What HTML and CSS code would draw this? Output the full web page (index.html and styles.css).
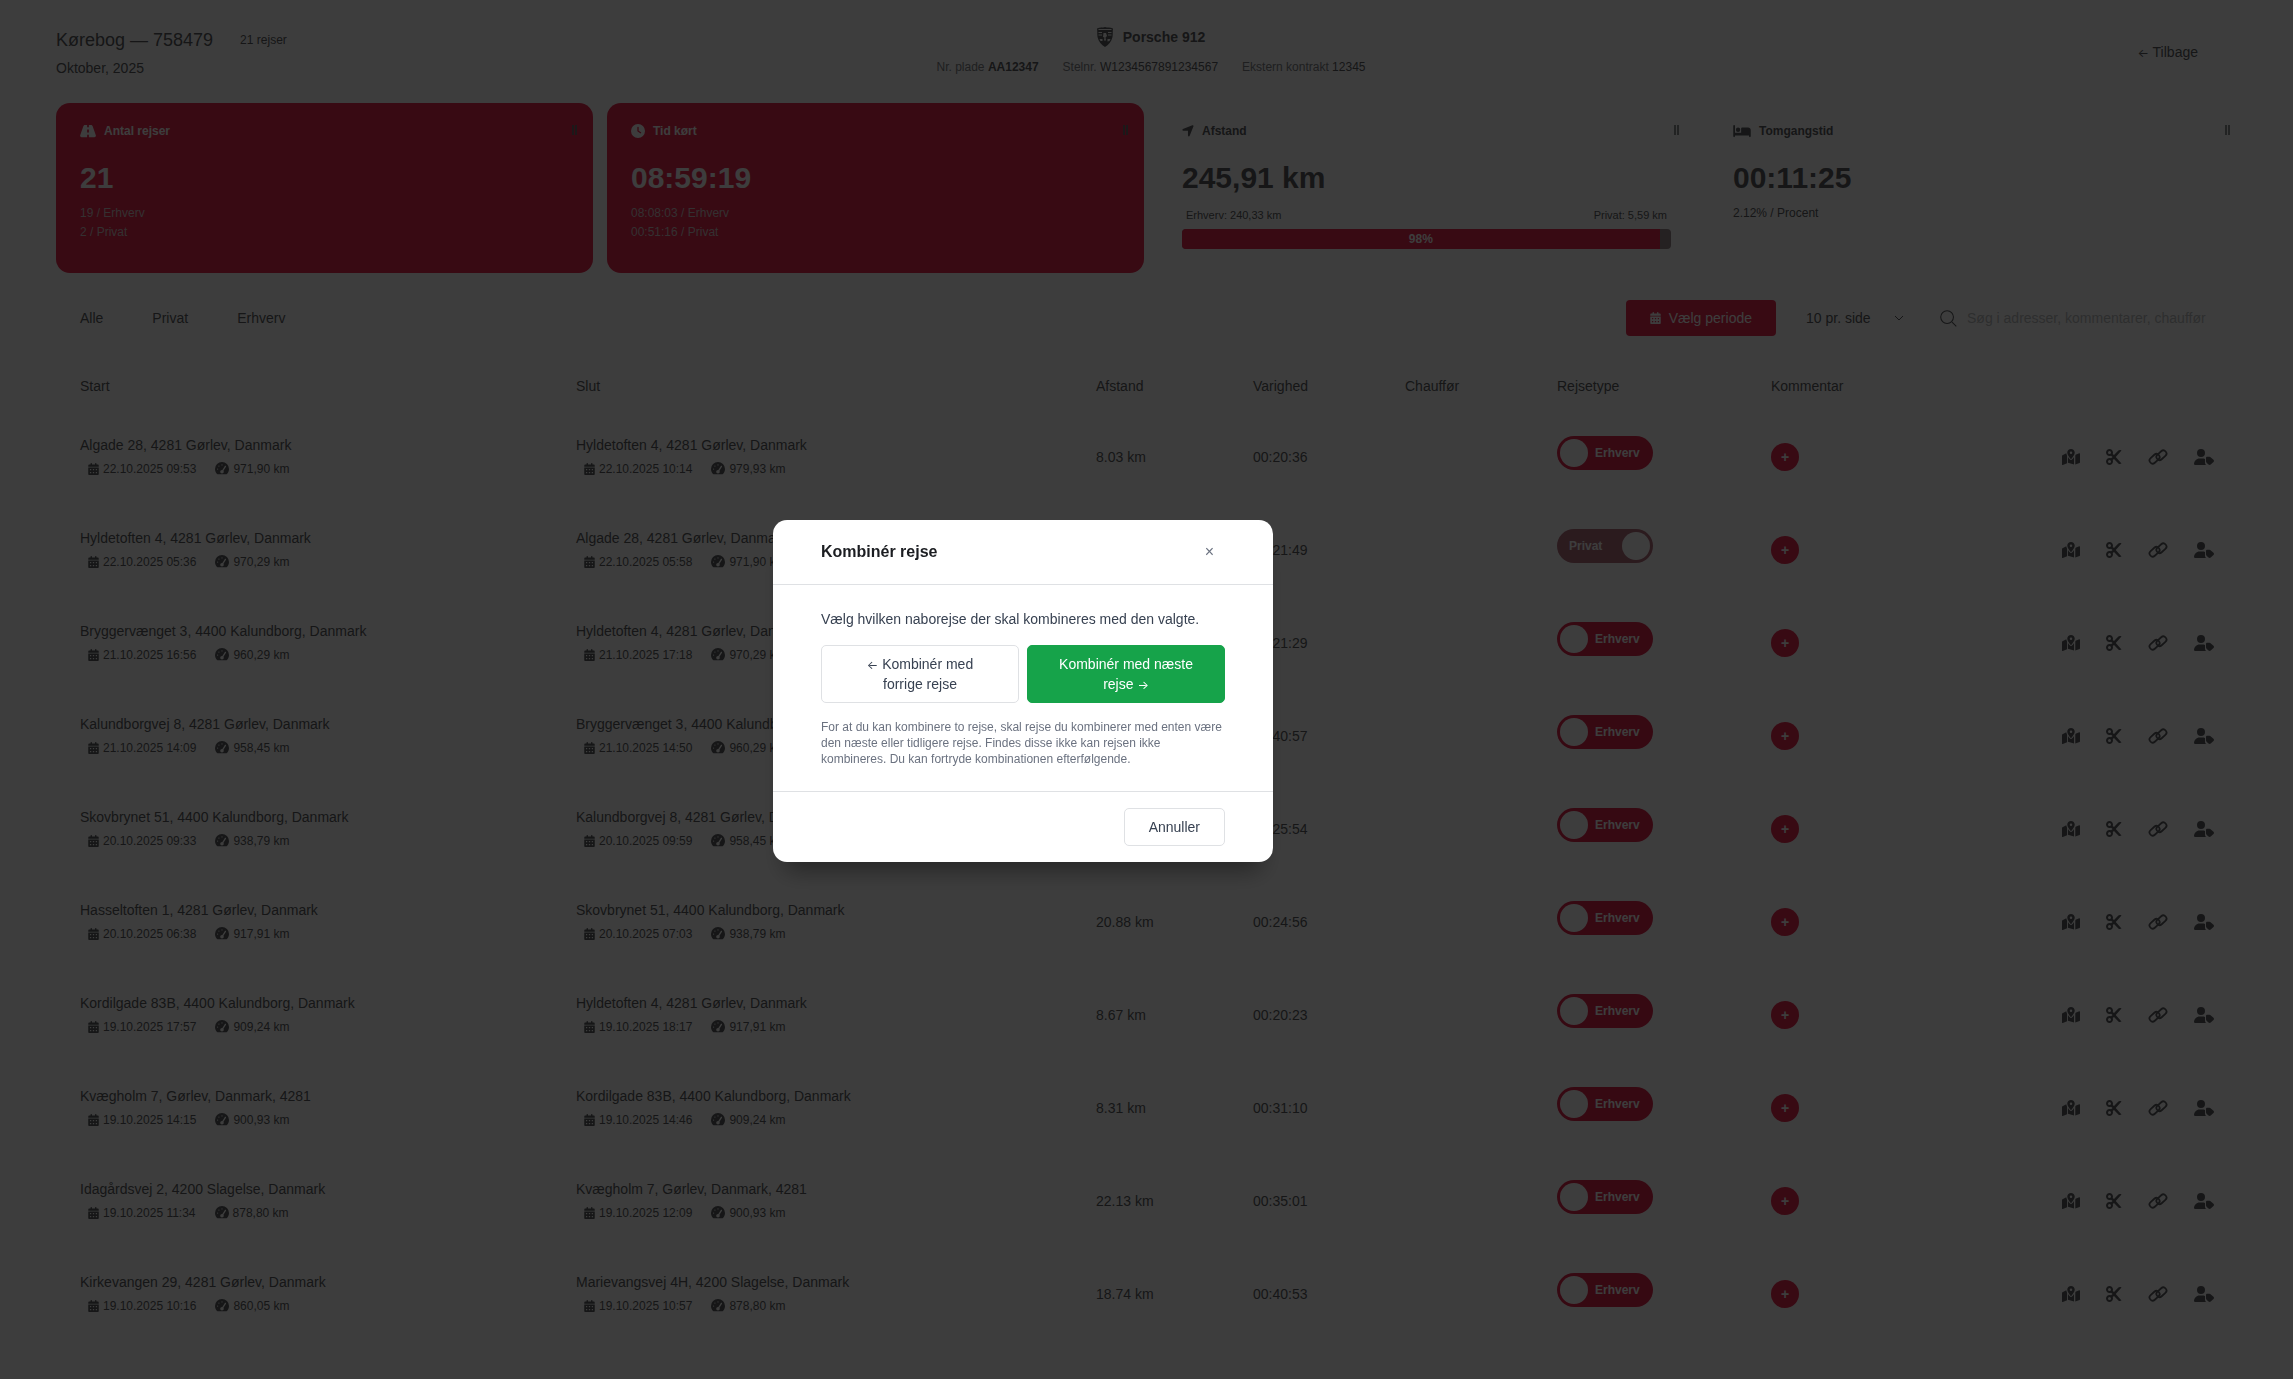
FILE: index.html
```html
<!DOCTYPE html>
<html lang="da">
<head>
  <meta charset="UTF-8" />
  <meta name="viewport" content="width=device-width, initial-scale=1" />
  <title>Kørebog — 758479</title>
  <link rel="stylesheet" href="styles.css">
</head>
<body>
  <!-- Icon sprite -->
  <svg class="sprite" aria-hidden="true">
    <symbol id="i-road" viewBox="0 0 576 512"><path d="M256 32H181c-27 0-51 17-60 42L5 401c-3 9-5 18-5 27 0 29 23 52 52 52h204v-64c0-18 14-32 32-32s32 14 32 32v64h204c29 0 52-23 52-52 0-9-2-18-5-27L455 74c-9-25-33-42-60-42h-75v64c0 18-14 32-32 32s-32-14-32-32V32zm64 192v64c0 18-14 32-32 32s-32-14-32-32v-64c0-18 14-32 32-32s32 14 32 32z"/></symbol>
    <symbol id="i-clock" viewBox="0 0 512 512"><path d="M256 0a256 256 0 1 1 0 512 256 256 0 1 1 0-512zm-24 120v136c0 8 4 16 11 20l96 64c11 7 26 4 33-7s4-26-7-33l-85-57V120c0-13-11-24-24-24s-24 11-24 24z"/></symbol>
    <symbol id="i-arrow" viewBox="0 0 448 512"><path d="M429 83c5-12 2-26-7-35s-23-12-35-7L35 185c-15 6-24 21-21 37s17 27 33 27h176v176c0 16 11 30 27 33s31-6 37-21z"/></symbol>
    <symbol id="i-bed" viewBox="0 0 640 512"><path d="M32 32c18 0 32 14 32 32v256h224V160c0-18 14-32 32-32h224c53 0 96 43 96 96v224c0 18-14 32-32 32s-32-14-32-32v-32H64v32c0 18-14 32-32 32S0 466 0 448V64c0-18 14-32 32-32zm144 96a80 80 0 1 1 0 160 80 80 0 1 1 0-160z"/></symbol>
    <symbol id="i-calendar" viewBox="0 0 448 512"><path fill-rule="evenodd" d="M128 0c18 0 32 14 32 32v32h128V32c0-18 14-32 32-32s32 14 32 32v32h48c27 0 48 21 48 48v48H0v-48c0-27 21-48 48-48h48V32c0-18 14-32 32-32zM0 192h448v272c0 27-21 48-48 48H48c-27 0-48-21-48-48V192zm72 66v46h56v-46H72zm124 0v46h56v-46h-56zm124 0v46h56v-46h-56zM72 386v46h56v-46H72zm124 0v46h56v-46h-56zm124 0v46h56v-46h-56z"/></symbol>
    <symbol id="i-gauge" viewBox="0 0 512 512"><path fill-rule="evenodd" d="M0 256a256 256 0 1 1 512 0c0 71-29 135-75 181-10 10-24 15-38 15H113c-14 0-28-5-38-15C29 391 0 327 0 256zm278-150a22 22 0 1 0-44 0 22 22 0 1 0 44 0zM256 416c35 0 64-29 64-64 0-12-4-24-10-34l92-146c7-11 4-26-8-33s-26-4-33 8l-92 145c-5-2-9-4-13-4-35 0-64 29-64 64s29 64 64 64zM166 148a22 22 0 1 0-44 0 22 22 0 1 0 44 0zM96 282a22 22 0 1 0 0-44 22 22 0 1 0 0 44z"/></symbol>
    <symbol id="i-map" viewBox="0 0 576 512"><path fill-rule="evenodd" d="M408 120c0 55-73 151-105 191-8 10-23 10-31 0-31-40-104-136-104-191C168 54 222 0 288 0s120 54 120 120zm-120 40a40 40 0 1 0 0-80 40 40 0 1 0 0 80zm137 44c4-8 7-16 10-24l116-46c12-5 25 4 25 17v271c0 10-6 19-15 23l-136 54V204zM138 138c2 14 7 28 13 42 3 8 7 16 11 24v251L25 510c-12 5-25-4-25-17V222c0-10 6-19 15-23l123-61zm190 193c14-17 36-47 57-79v246l-194-55V252c21 32 43 62 57 79 20 26 60 26 80 0z"/></symbol>
    <symbol id="i-cut" viewBox="0 0 512 512"><path fill-rule="evenodd" d="M256 192l-40-31c5-15 8-32 8-49C224 50 174 0 112 0S0 50 0 112s50 112 112 112c17 0 33-4 48-11l52 43-52 43c-15-7-31-11-48-11C50 288 0 338 0 400s50 112 112 112 112-50 112-112c0-17-3-34-8-49l40-31 140 144c21 21 64 25 100 2L312 256 496 46c-36-23-79-19-100 2zM64 112a48 48 0 1 1 96 0 48 48 0 1 1-96 0zm48 240a48 48 0 1 1 0 96 48 48 0 1 1 0-96z"/></symbol>
    <symbol id="i-link" viewBox="0 0 640 512"><g fill="none" stroke="currentColor" stroke-width="58"><rect x="30" y="212" width="360" height="200" rx="100" transform="rotate(-42 210 312)"/><rect x="250" y="100" width="360" height="200" rx="100" transform="rotate(-42 430 200)"/></g></symbol>
    <symbol id="i-user-tag" viewBox="0 0 640 512"><path fill-rule="evenodd" d="M224 256A128 128 0 1 0 224 0a128 128 0 1 0 0 256zm-46 48C80 304 0 384 0 482c0 17 13 30 30 30h354c-18-18-32-44-32-74V320c-25-11-52-16-82-16h-92zM384 290v105c0 17 7 33 19 45l60 56c20 20 52 20 72 0l88-78c22-20 22-54 0-74l-84-76c-12-12-28-19-45-19h-68c-23 0-42 18-42 41z"/></symbol>
    <symbol id="i-search" viewBox="0 0 24 24"><path fill="none" stroke="currentColor" stroke-width="1.5" d="M10 1a9 9 0 1 1 0 18 9 9 0 1 1 0-18zM17 17l6 6"/></symbol>
    <symbol id="i-crest" viewBox="0 0 32 40"><path fill-rule="evenodd" d="M0 3C6 0 11 2 16 0c5 2 10 0 16 3-1 6 0 10-1 17-2 9-8 16-15 20C9 36 3 29 1 20 0 13 1 9 0 3zm3 1v2h26V4zm0 6v2h7v-2zm0 5v2h7v-2zm19-5v2h7v-2zm0 5v2h7v-2zM5 24l2 4h4v-4zm16 0v5l4-1 2-4zM13 12l-1 8 3 1-1 6h4l-1-6 3-3-2-6z"/></symbol>
  </svg>

  <!-- Header -->
  <header class="header">
    <div class="header-left">
      <div class="title-row">
        <h1>Kørebog — 758479</h1>
        <span class="count">21 rejser</span>
      </div>
      <p class="period">Oktober, 2025</p>
    </div>
    <div class="header-center">
      <div class="car"><svg class="crest"><use href="#i-crest"/></svg><strong>Porsche 912</strong></div>
      <div class="car-info">
        <span>Nr. plade <b>AA12347</b></span>
        <span>Stelnr. <em>W1234567891234567</em></span>
        <span>Ekstern kontrakt <em>12345</em></span>
      </div>
    </div>
    <div class="header-right"><a href="#" class="back"><span class="arrow">←</span> Tilbage</a></div>
  </header>

  <!-- Stat cards -->
  <section class="cards">
    <div class="card red">
      <div class="card-head"><svg class="w16"><use href="#i-road"/></svg>Antal rejser<span class="grip"></span></div>
      <div class="value">21</div>
      <p class="sub">19 / Erhverv<br>2 / Privat</p>
    </div>
    <div class="card red">
      <div class="card-head"><svg class="w14"><use href="#i-clock"/></svg>Tid kørt<span class="grip"></span></div>
      <div class="value">08:59:19</div>
      <p class="sub">08:08:03 / Erhverv<br>00:51:16 / Privat</p>
    </div>
    <div class="card">
      <div class="card-head"><svg class="w12"><use href="#i-arrow"/></svg>Afstand<span class="grip"></span></div>
      <div class="value">245,91 km</div>
      <div class="bar-labels"><span>Erhverv: 240,33 km</span><span>Privat: 5,59 km</span></div>
      <div class="bar"><div class="bar-fill" style="width: 97.7%">98%</div></div>
    </div>
    <div class="card">
      <div class="card-head"><svg class="w18"><use href="#i-bed"/></svg>Tomgangstid<span class="grip"></span></div>
      <div class="value">00:11:25</div>
      <p class="sub">2.12% / Procent</p>
    </div>
  </section>

  <!-- Filters -->
  <div class="toolbar">
    <div class="tabs">
      <button type="button">Alle</button>
      <button type="button">Privat</button>
      <button type="button">Erhverv</button>
    </div>
    <div class="tools">
      <button type="button" class="period-button"><svg><use href="#i-calendar"/></svg>Vælg periode</button>
      <div class="select-wrap">
        <select aria-label="Rejser pr. side"><option>10 pr. side</option><option>25 pr. side</option></select>
        <svg viewBox="0 0 10 6"><path d="M1 1l4 4 4-4" fill="none" stroke="currentColor"/></svg>
      </div>
      <label class="search">
        <svg><use href="#i-search"/></svg>
        <input type="text" aria-label="Søg" placeholder="Søg i adresser, kommentarer, chauffør">
      </label>
    </div>
  </div>

  <!-- Trips -->
  <table class="trips">
    <colgroup>
      <col class="c-start"><col class="c-end"><col class="c-dist"><col class="c-time"><col class="c-time"><col class="c-type"><col class="c-note"><col>
    </colgroup>
    <thead>
      <tr>
        <th>Start</th>
        <th>Slut</th>
        <th>Afstand</th>
        <th>Varighed</th>
        <th>Chauffør</th>
        <th>Rejsetype</th>
        <th>Kommentar</th>
        <th></th>
      </tr>
    </thead>
    <tbody id="trips"></tbody>
  </table>

  <!-- Combine dialog -->
  <div class="overlay">
    <div class="modal" role="dialog" aria-modal="true" aria-labelledby="modal-title">
      <div class="modal-head">
        <h2 id="modal-title">Kombinér rejse</h2>
        <button type="button" class="close" aria-label="Luk">×</button>
      </div>
      <div class="modal-body">
        <p>Vælg hvilken naborejse der skal kombineres med den valgte.</p>
        <div class="choices">
          <button type="button" class="btn"><span class="arrow">←</span> Kombinér med forrige rejse</button>
          <button type="button" class="btn green">Kombinér med næste rejse <span class="arrow">→</span></button>
        </div>
        <p class="hint">For at du kan kombinere to rejse, skal rejse du kombinerer med enten være den næste eller tidligere rejse. Findes disse ikke kan rejsen ikke kombineres. Du kan fortryde kombinationen efterfølgende.</p>
      </div>
      <div class="modal-foot">
        <button type="button" class="btn">Annuller</button>
      </div>
    </div>
  </div>

  <script src="script.js"></script>
</body>
</html>
```
FILE: styles.css
```css
* {
  box-sizing: border-box;
}

body {
  margin: 0;
  padding: 0 47px 0 56px;
  min-height: 100vh;
  background: #ffffff;
  color: #5c5e62;
  font-family: Helvetica, "Liberation Sans", Arial, sans-serif;
  font-size: 14px;
  line-height: 20px;
}

h1, h2, p {
  margin: 0;
  font-weight: 400;
}

button, select, input {
  font: inherit;
  color: inherit;
  background: none;
  border: 0;
  padding: 0;
}

svg {
  display: block;
  fill: currentColor;
}

.sprite {
  display: none;
}

.arrow {
  font-family: Inter, sans-serif;
  font-size: 12px;
  line-height: 16px;
}

/* Header */
.header {
  display: grid;
  grid-template-columns: 1fr auto 1fr;
  align-items: center;
  height: 103px;
}

.header-left,
.header-center {
  height: 52px;
  padding-top: 2px;
  display: flex;
  flex-direction: column;
  justify-content: space-between;
}

.title-row {
  display: flex;
  align-items: center;
  gap: 27px;
}

h1 {
  font-size: 18px;
  line-height: 24px;
}

.count,
.car-info {
  font-size: 12px;
}

.header-center {
  align-items: center;
  padding: 1px 0;
}

.car {
  display: flex;
  align-items: center;
  gap: 10px;
}

.crest {
  width: 16px;
  height: 20px;
}

.car-info {
  display: flex;
  gap: 24px;
  color: #808286;
}

.car-info b,
.car-info em {
  font-style: normal;
  color: #5c5e62;
}

.header-right {
  text-align: right;
}

.back {
  padding: 8px 48px;
  color: inherit;
  text-decoration: none;
}

/* Stat cards */
.cards {
  display: grid;
  grid-template-columns: repeat(4, 1fr);
  gap: 14px;
}

.card {
  height: 170px;
  padding: 18px 24px;
  border-radius: 14px;
}

.card.red {
  background: #ea2a50;
  color: #ffffff;
}

.card-head {
  position: relative;
  display: flex;
  align-items: center;
  gap: 8px;
  font-size: 12px;
  font-weight: 700;
}

.card-head svg {
  height: 14px;
}

.w12 { width: 12px; }
.w14 { width: 14px; }
.w16 { width: 16px; }
.w18 { width: 18px; }

.grip {
  position: absolute;
  right: -8px;
  top: 4px;
  width: 5px;
  height: 10px;
  border: solid #909194;
  border-width: 0 2px;
}

.card.red .grip {
  border-color: #74656a;
}

.value {
  margin-top: 18px;
  font-size: 30px;
  line-height: 38px;
  font-weight: 700;
}

.sub {
  margin-top: 7px;
  font-size: 12px;
  line-height: 19px;
}

.card.red .sub {
  color: #d8c8cc;
}

.bar-labels {
  display: flex;
  justify-content: space-between;
  margin-top: 8px;
  padding: 0 4px;
  font-size: 11px;
}

.bar {
  height: 20px;
  margin-top: 4px;
  border-radius: 4px;
  background: #9a8a8e;
  overflow: hidden;
}

.bar-fill {
  background: #ea2a50;
  color: #ffffff;
  font-size: 12px;
  font-weight: 700;
  text-align: center;
}

/* Filters */
.toolbar {
  display: flex;
  justify-content: space-between;
  align-items: center;
  height: 90px;
}

.tabs button {
  padding: 8px 24px;
}

.tabs,
.tools {
  display: flex;
  align-items: center;
}

.tabs {
  gap: 1px;
}

.period-button {
  display: flex;
  align-items: center;
  gap: 8px;
  height: 36px;
  padding: 0 24px;
  border-radius: 4px;
  background: #ea2a50;
  color: #ffffff;
}

.period-button svg {
  width: 11px;
  height: 12px;
}

.select-wrap {
  display: flex;
  align-items: center;
  margin-left: 30px;
}

.select-wrap select {
  appearance: none;
  width: 88px;
}

.select-wrap svg {
  width: 10px;
  height: 6px;
}

.search {
  display: flex;
  align-items: center;
  gap: 10px;
  margin-left: 36px;
  padding-right: 24px;
}

.search svg {
  width: 17px;
  height: 17px;
}

.search input {
  width: 255px;
}

.search input::placeholder {
  color: #bdbfc2;
}

/* Trips table */
.trips {
  width: 100%;
  table-layout: fixed;
  border-collapse: collapse;
}

.c-start { width: 496px; }
.c-end { width: 520px; }
.c-dist { width: 157px; }
.c-time { width: 152px; }
.c-type { width: 214px; }
.c-note { width: 220px; }

.trips th {
  height: 47px;
  padding: 0 24px 2px;
  text-align: left;
  font-weight: 400;
}

.trips td {
  height: 93px;
  padding: 0 24px;
}

.meta {
  display: flex;
  align-items: center;
  gap: 4px;
  margin-top: 4px;
  padding-left: 8px;
  font-size: 12px;
}

.meta svg {
  width: 11px;
  height: 12px;
}

.meta svg.gauge {
  width: 14px;
  height: 14px;
  margin-left: 15px;
}

.switch {
  display: flex;
  align-items: center;
  gap: 7px;
  width: 96px;
  height: 34px;
  padding: 3px;
  margin-bottom: 8px;
  border-radius: 17px;
  background: #e0284d;
  color: #ffffff;
  font-size: 12px;
  font-weight: 700;
  cursor: pointer;
}

.switch input {
  appearance: none;
  width: 28px;
  height: 28px;
  margin: 0;
  border-radius: 50%;
  background: #ffffff;
}

.switch.private {
  flex-direction: row-reverse;
  justify-content: space-between;
  padding-left: 12px;
  background: #b4707f;
}

.add {
  display: block;
  width: 28px;
  height: 28px;
  border-radius: 50%;
  background: #ea2a50;
  color: #ffffff;
  font-weight: 700;
}

.actions {
  display: flex;
  justify-content: flex-end;
  gap: 26px;
  padding-right: 8px;
}

.actions svg {
  width: 20px;
  height: 16px;
}

.actions svg.map {
  width: 18px;
}

.actions svg.narrow {
  width: 16px;
}

/* Dialog */
.overlay {
  position: fixed;
  inset: 0;
  display: flex;
  align-items: center;
  justify-content: center;
  padding: 3px 247px 0 0;
  background: rgba(0, 0, 0, 0.76);
}

.modal {
  width: 500px;
  border-radius: 14px;
  background: #ffffff;
  color: #374151;
  box-shadow: 0 20px 25px -12px rgba(0, 0, 0, 0.4);
}

.modal-head {
  display: flex;
  justify-content: space-between;
  align-items: center;
  height: 65px;
  padding: 0 59px 0 48px;
  border-bottom: 1px solid #dfe1e4;
}

h2 {
  font-size: 16px;
  font-weight: 700;
  color: #1b1d21;
}

.close {
  color: #6b7280;
  font-size: 16px;
}

.modal-body {
  padding: 24px 48px;
}

.choices {
  display: grid;
  grid-template-columns: 1fr 1fr;
  gap: 8px;
  margin: 16px 0;
}

.btn {
  padding: 8px 24px;
  border: 1px solid #dfe1e4;
  border-radius: 5px;
}

.btn.green {
  border-color: #16a34a;
  background: #16a34a;
  color: #ffffff;
}

.hint {
  font-size: 12px;
  line-height: 16px;
  color: #6b7280;
}

.modal-foot {
  display: flex;
  justify-content: flex-end;
  padding: 16px 48px;
  border-top: 1px solid #dfe1e4;
}
```
FILE: script.js
```js
const trips = [
  ["Algade 28, 4281 Gørlev, Danmark", "22.10.2025 09:53", "971,90", "Hyldetoften 4, 4281 Gørlev, Danmark", "22.10.2025 10:14", "979,93", "8.03", "00:20:36"],
  ["Hyldetoften 4, 4281 Gørlev, Danmark", "22.10.2025 05:36", "970,29", "Algade 28, 4281 Gørlev, Danmark", "22.10.2025 05:58", "971,90", "1.61", "00:21:49", true],
  ["Bryggervænget 3, 4400 Kalundborg, Danmark", "21.10.2025 16:56", "960,29", "Hyldetoften 4, 4281 Gørlev, Danmark", "21.10.2025 17:18", "970,29", "10.00", "00:21:29"],
  ["Kalundborgvej 8, 4281 Gørlev, Danmark", "21.10.2025 14:09", "958,45", "Bryggervænget 3, 4400 Kalundborg, Danmark", "21.10.2025 14:50", "960,29", "1.84", "00:40:57"],
  ["Skovbrynet 51, 4400 Kalundborg, Danmark", "20.10.2025 09:33", "938,79", "Kalundborgvej 8, 4281 Gørlev, Danmark", "20.10.2025 09:59", "958,45", "19.66", "00:25:54"],
  ["Hasseltoften 1, 4281 Gørlev, Danmark", "20.10.2025 06:38", "917,91", "Skovbrynet 51, 4400 Kalundborg, Danmark", "20.10.2025 07:03", "938,79", "20.88", "00:24:56"],
  ["Kordilgade 83B, 4400 Kalundborg, Danmark", "19.10.2025 17:57", "909,24", "Hyldetoften 4, 4281 Gørlev, Danmark", "19.10.2025 18:17", "917,91", "8.67", "00:20:23"],
  ["Kvægholm 7, Gørlev, Danmark, 4281", "19.10.2025 14:15", "900,93", "Kordilgade 83B, 4400 Kalundborg, Danmark", "19.10.2025 14:46", "909,24", "8.31", "00:31:10"],
  ["Idagårdsvej 2, 4200 Slagelse, Danmark", "19.10.2025 11:34", "878,80", "Kvægholm 7, Gørlev, Danmark, 4281", "19.10.2025 12:09", "900,93", "22.13", "00:35:01"],
  ["Kirkevangen 29, 4281 Gørlev, Danmark", "19.10.2025 10:16", "860,05", "Marievangsvej 4H, 4200 Slagelse, Danmark", "19.10.2025 10:57", "878,80", "18.74", "00:40:53"]
];

const icon = (name, cls = "") => `<svg class="${cls}"><use href="#i-${name}"/></svg>`;

const place = (address, date, km) => `
  <div>${address}</div>
  <div class="meta">${icon("calendar")}<span>${date}</span>${icon("gauge", "gauge")}<span>${km} km</span></div>`;

const tableBody = document.getElementById("trips");
tableBody.innerHTML = trips.map(t => `<tr>
  <td>${place(t[0], t[1], t[2])}</td>
  <td>${place(t[3], t[4], t[5])}</td>
  <td>${t[6]} km</td>
  <td>${t[7]}</td>
  <td></td>
  <td><label class="switch ${t[8] ? "private" : ""}"><input type="checkbox" ${t[8] ? "checked" : ""}>${t[8] ? "Privat" : "Erhverv"}</label></td>
  <td><button type="button" class="add" aria-label="Tilføj kommentar">+</button></td>
  <td><div class="actions">
    <button type="button" aria-label="Vis på kort">${icon("map", "map")}</button>
    <button type="button" aria-label="Opdel rejse">${icon("cut", "narrow")}</button>
    <button type="button" aria-label="Kombinér rejse">${icon("link")}</button>
    <button type="button" aria-label="Vælg chauffør">${icon("user-tag")}</button>
  </div></td>
</tr>`).join("");
```
